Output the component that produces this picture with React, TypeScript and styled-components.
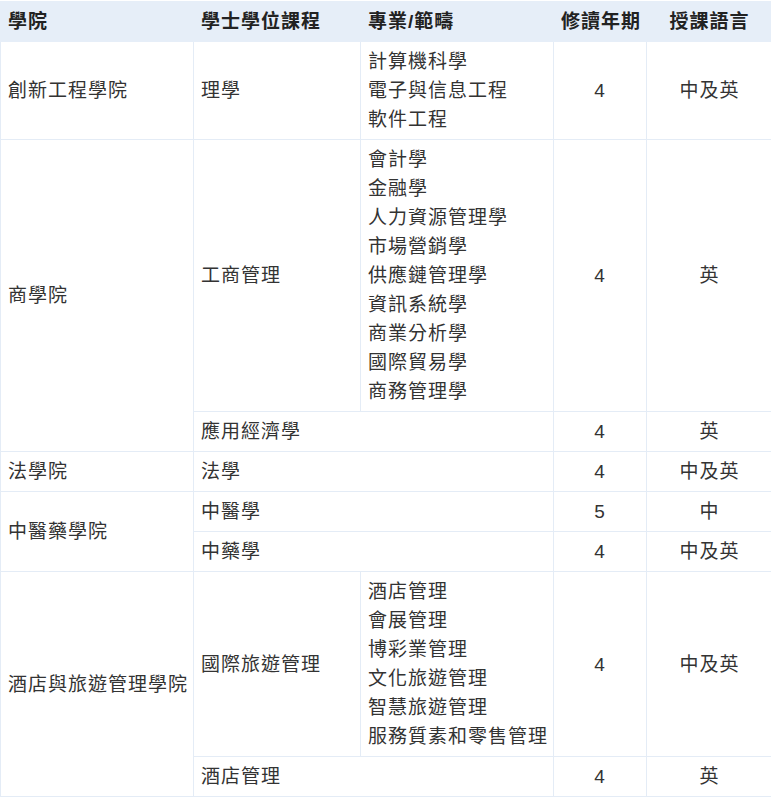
import React from "react";
import styled, { createGlobalStyle } from "styled-components";

const Global = createGlobalStyle`
  html, body { margin: 0; padding: 0; background: #ffffff; }
  body { font-family: "Liberation Sans", "Noto Sans CJK TC", sans-serif; }
`;

const Table = styled.table`
  border-collapse: collapse;
  table-layout: fixed;
  width: 772px;
  margin-top: 1px;
  font-size: 19px;
  letter-spacing: 1px;
  color: #333333;
`;

const HeadCell = styled.th<{ $center?: boolean }>`
  background: #e6eef8;
  color: #222222;
  font-weight: 700;
  text-align: ${(p) => (p.$center ? "center" : "left")};
  padding: 5px 7px;
  height: 29px;
  line-height: 29px;
  border: 1px solid #e6eef8;
  white-space: nowrap;
`;

const Cell = styled.td<{ $center?: boolean }>`
  text-align: ${(p) => (p.$center ? "center" : "left")};
  vertical-align: middle;
  padding: 5px 7px;
  line-height: 29px;
  border: 1px solid #e4ecf6;
  white-space: nowrap;
`;

const Line = styled.div`
  line-height: 29px;
`;

type Row = {
  school?: string;
  schoolSpan?: number;
  program: string;
  majors?: string[];
  years: string;
  lang: string;
};

const rows: Row[] = [
  { school: "創新工程學院", schoolSpan: 1, program: "理學", majors: ["計算機科學", "電子與信息工程", "軟件工程"], years: "4", lang: "中及英" },
  {
    school: "商學院",
    schoolSpan: 2,
    program: "工商管理",
    majors: ["會計學", "金融學", "人力資源管理學", "市場營銷學", "供應鏈管理學", "資訊系統學", "商業分析學", "國際貿易學", "商務管理學"],
    years: "4",
    lang: "英",
  },
  { program: "應用經濟學", years: "4", lang: "英" },
  { school: "法學院", schoolSpan: 1, program: "法學", years: "4", lang: "中及英" },
  { school: "中醫藥學院", schoolSpan: 2, program: "中醫學", years: "5", lang: "中" },
  { program: "中藥學", years: "4", lang: "中及英" },
  {
    school: "酒店與旅遊管理學院",
    schoolSpan: 2,
    program: "國際旅遊管理",
    majors: ["酒店管理", "會展管理", "博彩業管理", "文化旅遊管理", "智慧旅遊管理", "服務質素和零售管理"],
    years: "4",
    lang: "中及英",
  },
  { program: "酒店管理", years: "4", lang: "英" },
];

export default function App() {
  return (
    <>
      <Global />
      <Table>
        <colgroup>
          <col style={{ width: 193 }} />
          <col style={{ width: 167 }} />
          <col style={{ width: 193 }} />
          <col style={{ width: 93 }} />
          <col style={{ width: 126 }} />
        </colgroup>
        <thead>
          <tr>
            <HeadCell>學院</HeadCell>
            <HeadCell>學士學位課程</HeadCell>
            <HeadCell>專業/範疇</HeadCell>
            <HeadCell $center>修讀年期</HeadCell>
            <HeadCell $center>授課語言</HeadCell>
          </tr>
        </thead>
        <tbody>
          {rows.map((r, i) => (
            <tr key={i}>
              {r.school && <Cell rowSpan={r.schoolSpan}>{r.school}</Cell>}
              {r.majors ? (
                <>
                  <Cell>{r.program}</Cell>
                  <Cell>
                    {r.majors.map((m) => (
                      <Line key={m}>{m}</Line>
                    ))}
                  </Cell>
                </>
              ) : (
                <Cell colSpan={2}>{r.program}</Cell>
              )}
              <Cell $center>{r.years}</Cell>
              <Cell $center>{r.lang}</Cell>
            </tr>
          ))}
        </tbody>
      </Table>
    </>
  );
}
